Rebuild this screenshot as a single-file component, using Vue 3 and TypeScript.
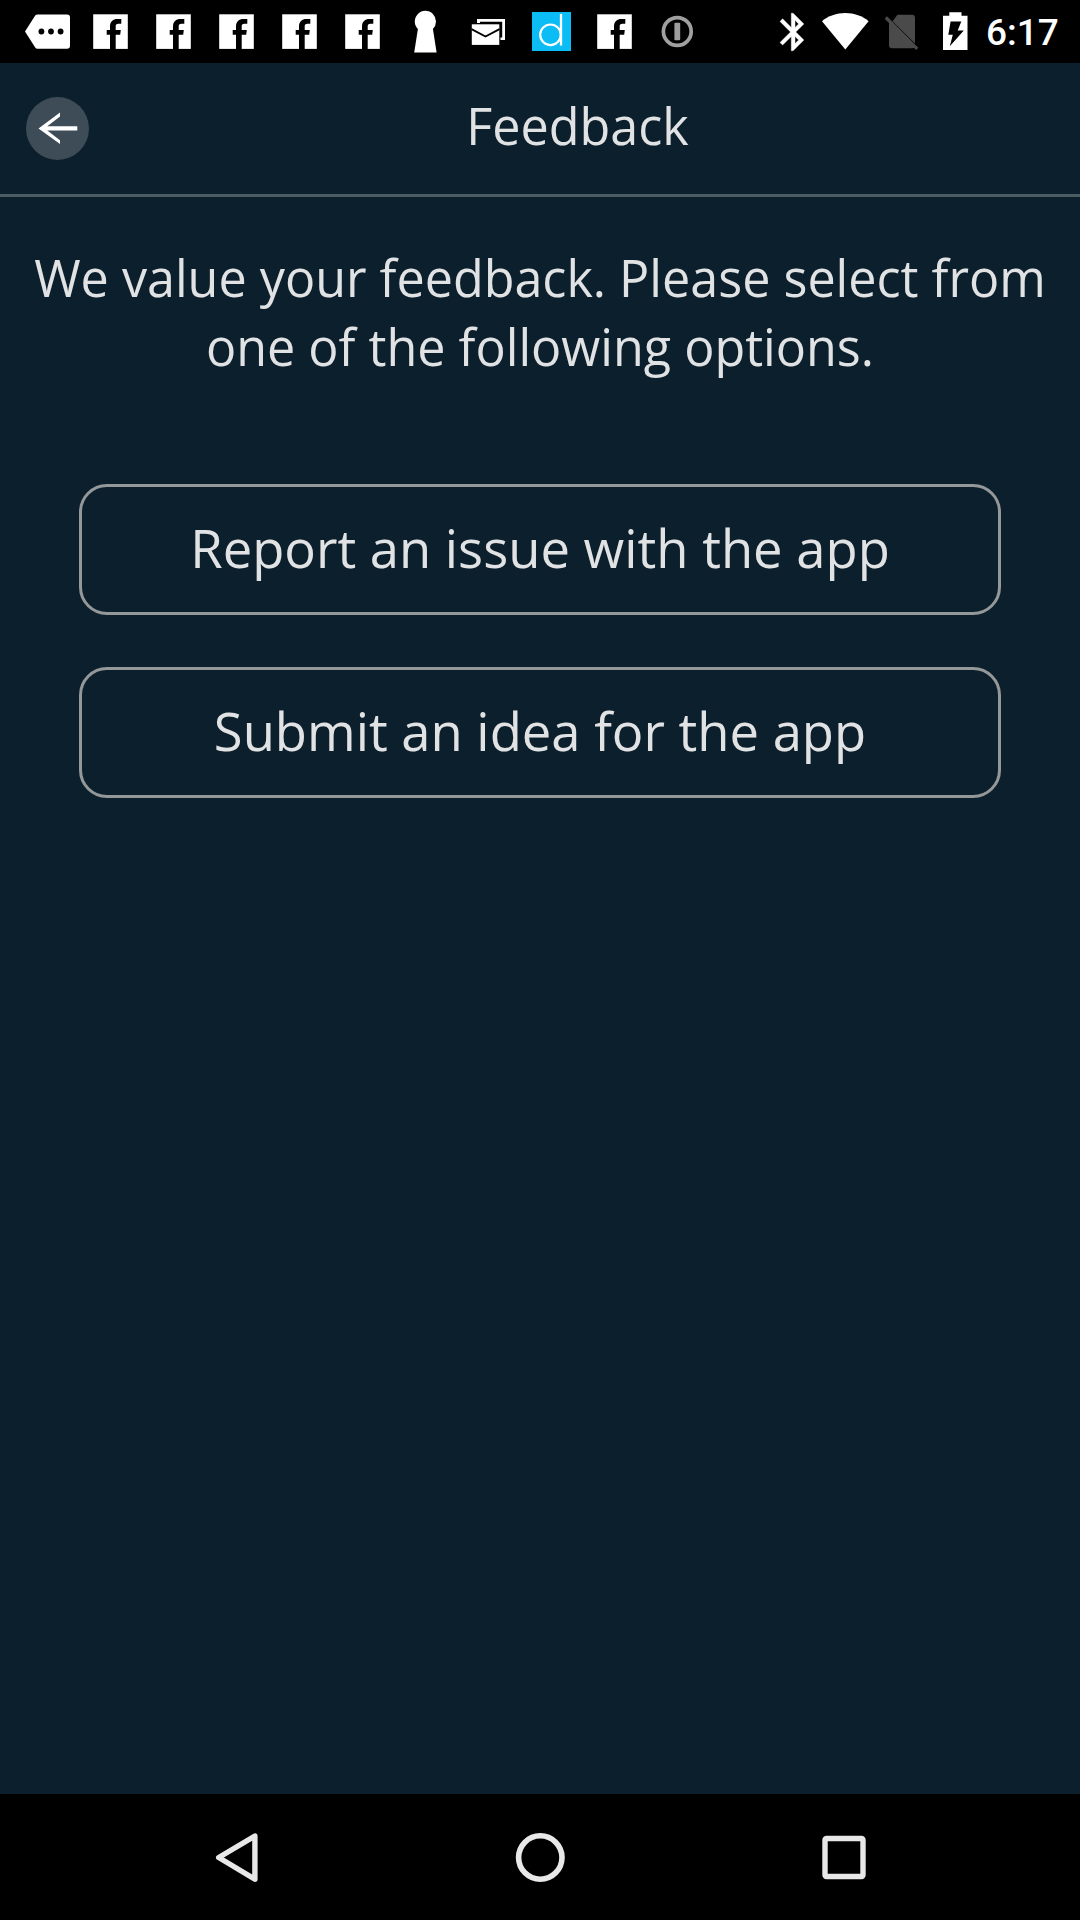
<script setup lang="ts">
type Notice = 'message' | 'facebook' | 'keyhole' | 'mail' | 'dapp' | 'info'

const notices: Notice[] = [
  'message', 'facebook', 'facebook', 'facebook', 'facebook', 'facebook',
  'keyhole', 'mail', 'dapp', 'facebook', 'info',
]
const options: string[] = ['Report an issue with the app', 'Submit an idea for the app']
</script>

<template>
  <div class="screen">
    <div class="status">
      <div class="notices">
        <svg v-for="(n, i) in notices" :key="i" width="63" height="63" viewBox="0 0 63 63">
          <template v-if="n === 'message'">
            <path d="M9 31.5L19.2 15.6Q20 14.4 21.5 14.4H51Q54 14.4 54 17.4V45.8Q54 48.8 51 48.8H21.5Q20 48.8 19.2 47.4Z" fill="#fff" />
            <circle cx="25.4" cy="31.5" r="2.9" /><circle cx="35" cy="31.5" r="2.9" /><circle cx="44.6" cy="31.5" r="2.9" />
          </template>
          <template v-else-if="n === 'facebook'">
            <rect x="14.2" y="14.3" width="34.6" height="34.6" fill="#fff" />
            <path d="M31 49V34.8H27.7V30H31V26.5C31 21.5 34 19 38.5 19H42.3V23.7H39.5C37.3 23.7 36.7 24.7 36.7 26.5V30H41.8L41.2 34.8H36.7V49Z" />
          </template>
          <template v-else-if="n === 'keyhole'">
            <circle cx="31.4" cy="21.4" r="10.6" fill="#fff" />
            <path d="M24.2 27H38.6L42.6 52.4H20.2Z" fill="#fff" />
          </template>
          <template v-else-if="n === 'mail'">
            <path d="M20 23V19H48V40H43.5V37.5H45.2V21.8H23V23Z" fill="#fff" />
            <rect x="14.8" y="24.3" width="27.5" height="20.6" fill="#fff" />
            <path d="M14.5 29.2L28.5 36.5L42.5 29.2" fill="none" stroke="#000" stroke-width="1.9" />
          </template>
          <template v-else-if="n === 'dapp'">
            <rect x="12" y="12" width="39" height="39" fill="#0cbcf4" />
            <circle cx="30.5" cy="34.8" r="10.3" fill="none" stroke="#fff" stroke-width="2.2" />
            <path d="M41 14V45.6" stroke="#fff" stroke-width="2.3" />
          </template>
          <template v-else>
            <circle cx="31.3" cy="31.5" r="13.9" fill="none" stroke="#a0a0a0" stroke-width="3.7" />
            <rect x="28.4" y="22.8" width="5.8" height="17.4" rx="1" fill="#9c9c9c" />
          </template>
        </svg>
      </div>
      <svg class="system" width="210" height="63" viewBox="770 0 210 63">
        <g transform="translate(770.6 9.4) scale(1.88)" fill="#fff">
          <path d="M17.71 7.71L12 2h-1v7.59L6.41 5 5 6.41 10.59 12 5 17.59 6.41 19 11 14.41V22h1l5.71-5.71-4.3-4.29 4.3-4.29zM13 5.83l1.88 1.88L13 9.59V5.83zm1.88 10.46L13 18.17v-3.76l1.88 1.88z" stroke="#fff" stroke-width=".2" />
        </g>
        <path d="M845.3 49.5L822 21.2C828 16 836.5 13 845.3 13S862.6 16 868.6 21.2Z" fill="#fff" />
        <path d="M897.5 14.7H912Q915 14.7 915 17.7V43.6L892.5 21.2ZM889 21.5L915 47.5Q913.6 48.2 912 48.2H892Q889 48.2 889 45.2Z" fill="#4a4a4a" />
        <path d="M885.8 17.5L917.2 48.9" stroke="#4a4a4a" stroke-width="3.2" />
        <path d="M949.3 12.2H961.5V15.7H967.5V50H943V15.7H949.3Z" fill="#fff" />
        <path d="M950.6 21.6H961.3L957.7 30.5H963.8L949.8 46.3L952.8 34.8H948.3Z" />
      </svg>
      <span class="clock">6:17</span>
    </div>

    <header class="header">
      <svg class="back" width="63" height="63" viewBox="0 0 63 63">
        <circle cx="31.5" cy="31.5" r="31.5" fill="#3d4c57" />
        <path d="M51.3 29.3V33.4H21.3L34 43.2V47.1L12.5 31.4L34 15.4V19.6L21.3 29.3Z" fill="#fff" />
      </svg>
      <h1 class="title">Feedback</h1>
    </header>

    <main class="content">
      <p class="intro">We value your feedback. Please select from<br />one of the following options.</p>
      <button v-for="o in options" :key="o" class="option">{{ o }}</button>
    </main>

    <nav class="nav">
      <svg width="1080" height="126" viewBox="0 0 1080 126" fill="none" stroke="#e8e8e8">
        <path d="M218.7 63.5L254.9 42V85.2Z" stroke-width="5.4" stroke-linejoin="round" />
        <circle cx="540.3" cy="63.5" r="21.7" stroke-width="5.6" />
        <rect x="825" y="44.5" width="38" height="38" rx="1.5" stroke-width="5.4" />
      </svg>
    </nav>
  </div>
</template>

<style>
body { margin: 0; background: #0c1f2c; }
</style>

<style scoped>
.screen { width: 1080px; height: 1920px; display: flex; flex-direction: column; background: #0c1f2c; overflow: hidden; font-family: "Open Sans", "Noto Sans", sans-serif; color: #e1e2e3; }
.status { height: 63px; flex: none; display: flex; background: #000; }
.notices { display: flex; margin-left: 16px; width: 693px; }
.system { margin-left: 61px; flex: none; }
.clock { margin-left: 6px; font: 500 37px/65px Roboto, sans-serif; color: #fff; }
.header { height: 131px; flex: none; display: flex; align-items: center; border-bottom: 3px solid #4c5c63; }
.back { margin-left: 26px; flex: none; }
.title { flex: 1; margin: 0; padding: 0 14px 5px 0; text-align: center; font-size: 50.3px; font-weight: 400; line-height: 68px; }
.content { flex: 1; display: flex; flex-direction: column; align-items: center; }
.intro { margin: 46px 0 103px; text-align: center; font-size: 50.27px; line-height: 69px; white-space: nowrap; }
.option { box-sizing: border-box; width: 922px; height: 131px; margin-bottom: 52px; padding: 0 0 4px; border: 3px solid #949899; border-radius: 28px; background: transparent; color: inherit; font-family: inherit; font-size: 52.55px; line-height: 71px; white-space: nowrap; }
.nav { height: 126px; flex: none; background: #000; }
</style>
